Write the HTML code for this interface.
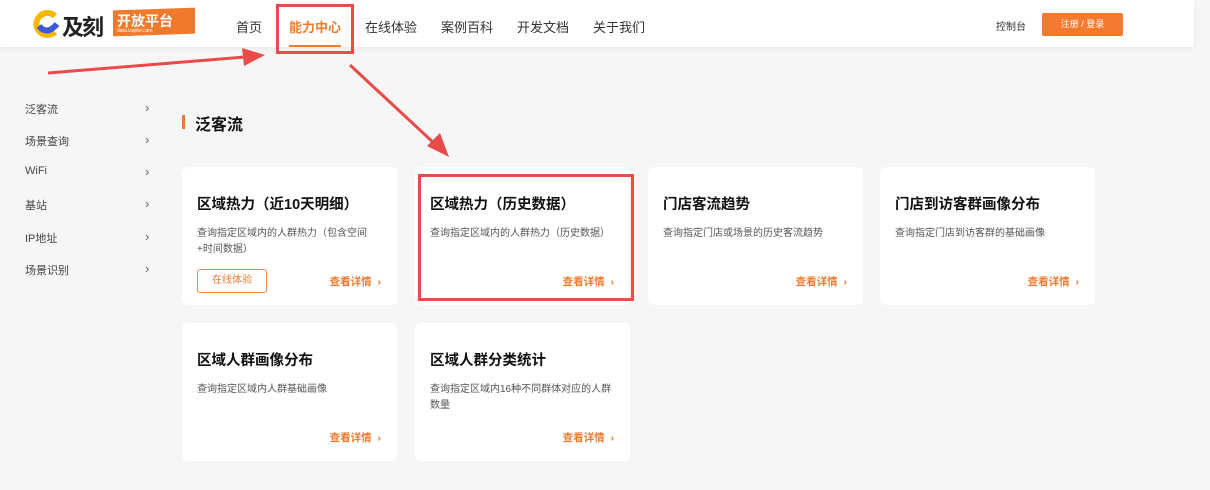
<!DOCTYPE html>
<html><head><meta charset="utf-8"><style>
*{margin:0;padding:0;box-sizing:border-box}
body{width:1210px;height:490px;background:#f6f6f6;font-family:"Liberation Sans","Noto Sans CJK SC",sans-serif;position:relative;overflow:hidden;color:#222}
.hd{position:absolute;left:0;top:0;width:1194px;height:47px;background:#fff;box-shadow:0 2px 6px rgba(0,0,0,.06)}
.a{position:absolute;white-space:nowrap}
.nav{top:17px;font-size:13px;color:#333}
.sb{left:25px;font-size:11px;color:#444}
.ch{left:145px;font-size:13px;color:#666}
.card{position:absolute;width:215px;height:138px;background:#fff;border-radius:6px}
.card h3{position:absolute;left:15px;top:26px;font-size:14.5px;font-weight:bold;color:#111}
.card p{position:absolute;left:15px;top:59px;width:185px;font-size:10px;line-height:16px;color:#555}
.card .lk{position:absolute;right:16px;top:107px;font-size:10.5px;font-weight:bold;color:#f07a2c}
.btn{position:absolute;left:15px;top:102px;width:70px;height:24px;border:1px solid #f08a4a;border-radius:3px;color:#f07a2c;font-size:10px;text-align:center;line-height:22px}
</style></head><body>
<div class="hd"></div>
<svg class="a" style="left:33px;top:10px" width="26" height="28"><path d="M22 6A11 11 0 1 0 22 22" stroke="#f5b800" stroke-width="6" fill="none"/><path d="M6 16Q14 26 24 14" stroke="#3a5bd9" stroke-width="6" fill="none"/></svg>
<div class="a" style="left:62px;top:10px;font-size:22px;font-weight:bold;color:#222;letter-spacing:-2px">及刻</div>
<div class="a" style="left:113px;top:9px;width:82px;height:26px;background:#f07a2c;transform:skewY(-2deg)"></div>
<div class="a" style="left:117px;top:11px;font-size:14px;font-weight:bold;color:#fff">开放平台</div>
<div class="a" style="left:117px;top:28px;font-size:5px;color:#fff">data.issjike.com</div>
<div class="a nav" style="left:236px">首页</div>
<div class="a nav" style="left:289px;color:#f07a2c;font-weight:bold">能力中心</div>
<div class="a" style="left:289px;top:45px;width:52px;height:2px;background:#f07a2c"></div>
<div class="a" style="left:276px;top:4px;width:78px;height:50px;border:3px solid #e84b4b"></div>
<div class="a nav" style="left:365px">在线体验</div>
<div class="a nav" style="left:441px">案例百科</div>
<div class="a nav" style="left:517px">开发文档</div>
<div class="a nav" style="left:593px">关于我们</div>
<div class="a" style="left:996px;top:18px;font-size:10px;color:#333">控制台</div>
<div class="a" style="left:1042px;top:13px;width:81px;height:23px;background:#f57a2f;border-radius:2px;color:#fff;font-size:9px;text-align:center;line-height:23px">注册 / 登录</div>
<div class="a sb" style="top:101px">泛客流</div><div class="a ch" style="top:100px">›</div>
<div class="a sb" style="top:133px">场景查询</div><div class="a ch" style="top:132px">›</div>
<div class="a sb" style="top:165px">WiFi</div><div class="a ch" style="top:164px">›</div>
<div class="a sb" style="top:197px">基站</div><div class="a ch" style="top:196px">›</div>
<div class="a sb" style="top:230px">IP地址</div><div class="a ch" style="top:229px">›</div>
<div class="a sb" style="top:262px">场景识别</div><div class="a ch" style="top:261px">›</div>
<div class="a" style="left:182px;top:115px;width:3px;height:14px;background:#f07a2c"></div>
<div class="a" style="left:195px;top:111px;font-size:16px;font-weight:bold;color:#111">泛客流</div>
<div class="card" style="left:182px;top:167px"><h3>区域热力（近10天明细）</h3><p>查询指定区域内的人群热力（包含空间+时间数据）</p><div class="btn">在线体验</div><div class="lk">查看详情 &nbsp;›</div></div>
<div class="card" style="left:415px;top:167px"><h3>区域热力（历史数据）</h3><p>查询指定区域内的人群热力（历史数据）</p><div class="lk">查看详情 &nbsp;›</div></div>
<div class="card" style="left:648px;top:167px"><h3>门店客流趋势</h3><p>查询指定门店或场景的历史客流趋势</p><div class="lk">查看详情 &nbsp;›</div></div>
<div class="card" style="left:880px;top:167px"><h3>门店到访客群画像分布</h3><p>查询指定门店到访客群的基础画像</p><div class="lk">查看详情 &nbsp;›</div></div>
<div class="card" style="left:182px;top:323px"><h3>区域人群画像分布</h3><p>查询指定区域内人群基础画像</p><div class="lk">查看详情 &nbsp;›</div></div>
<div class="card" style="left:415px;top:323px"><h3>区域人群分类统计</h3><p>查询指定区域内16种不同群体对应的人群数量</p><div class="lk">查看详情 &nbsp;›</div></div>
<div class="a" style="left:418px;top:174px;width:216px;height:127px;border:3px solid #e84b4b"></div>
<svg class="a" style="left:0;top:0" width="1210" height="490"><g stroke="#e84b4b" stroke-width="3" fill="#e84b4b"><line x1="48" y1="73" x2="245" y2="57"/><polygon points="265,55 242,48 244,66" stroke="none"/><line x1="350" y1="65" x2="436" y2="145"/><polygon points="449,157 427,146 440,133" stroke="none"/></g></svg>
</body></html>
